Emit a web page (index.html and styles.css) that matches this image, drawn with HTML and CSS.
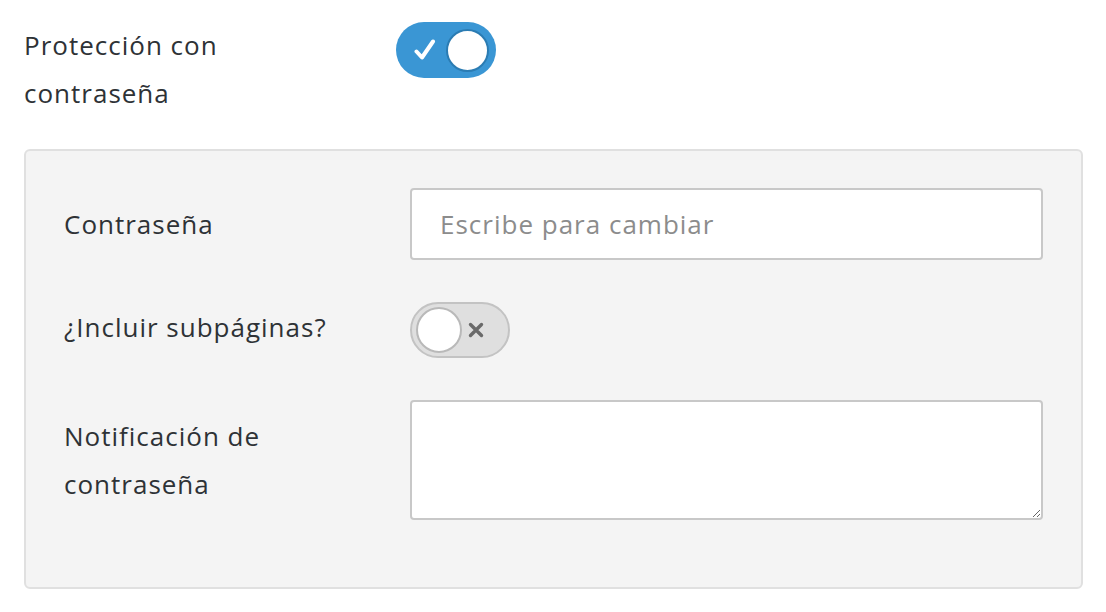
FILE: index.html
```html
<!DOCTYPE html>
<html lang="es">
<head>
<meta charset="utf-8">
<link rel="stylesheet" href="styles.css">
</head>
<body>
<div class="page">
  <div class="top-row">
    <div class="top-label">Protección con<br>contraseña</div>
    <div class="toggle toggle-on">
      <svg class="check" width="22" height="22" viewBox="0 0 22 22"><path d="M2.5 12.5 L8 18.5 L19 2.5" fill="none" stroke="#fff" stroke-width="4" stroke-linecap="round" stroke-linejoin="round"/></svg>
      <span class="knob"></span>
    </div>
  </div>
  <div class="panel">
    <div class="row">
      <label class="label">Contraseña</label>
      <input class="field" type="text" placeholder="Escribe para cambiar">
    </div>
    <div class="row row-toggle">
      <label class="label">¿Incluir subpáginas?</label>
      <div class="toggle toggle-off">
        <span class="knob"></span>
        <svg class="cross" width="16" height="16" viewBox="0 0 16 16"><path d="M2.5 2.5 L13.5 13.5 M13.5 2.5 L2.5 13.5" fill="none" stroke="#6a6a6a" stroke-width="3.4" stroke-linecap="round"/></svg>
      </div>
    </div>
    <div class="row">
      <label class="label">Notificación de<br>contraseña</label>
      <textarea class="field area"></textarea>
    </div>
  </div>
</div>
</body>
</html>
```
FILE: styles.css
```css
* { box-sizing: border-box; }
html, body { margin: 0; padding: 0; background: #fff; }
body {
  font-family: "Open Sans", "Lato", sans-serif;
  font-size: 26px;
  letter-spacing: 1px;
  line-height: 48px;
  color: #2e3236;
}
.page {
  padding: 21px 23px 0 24px;
}
.top-row {
  display: flex;
  align-items: flex-start;
}
.top-label {
  width: 372px;
}
.toggle {
  position: relative;
  width: 100px;
  height: 56px;
  border-radius: 28px;
  display: flex;
  align-items: center;
  flex-shrink: 0;
}
.toggle-on {
  margin-top: 1px;
  background: #3a96d4;
  padding: 0 7px 0 18px;
  justify-content: space-between;
}
.toggle-on .knob {
  width: 43px;
  height: 43px;
  border-radius: 50%;
  background: #fff;
  border: 2px solid #2b7cb3;
}
.check { display: block; }
.toggle-off {
  background: #dfdfdf;
  border: 2px solid #c3c3c3;
  padding: 0 0 0 4px;
}
.toggle-off .knob {
  width: 46px;
  height: 46px;
  border-radius: 50%;
  background: #fff;
  border: 2px solid #b9b9b9;
}
.cross {
  display: block;
  margin-left: 6px;
}
.panel {
  margin-top: 32px;
  width: 1059px;
  background: #f4f4f4;
  border: 2px solid #e0e0e0;
  border-radius: 6px;
  padding: 37px 38px 67px 38px;
  display: flex;
  flex-direction: column;
  gap: 42px;
}
.row {
  display: flex;
  align-items: flex-start;
}
.label {
  width: 346px;
  flex-shrink: 0;
  padding-top: 12px;
}
.row-toggle .label {
  padding-top: 1px;
}
.field {
  width: 633px;
  height: 72px;
  border: 2px solid #c8c8c8;
  border-radius: 4px;
  background: #fff;
  font-family: inherit;
  font-size: 26px;
  letter-spacing: 1px;
  color: #2e3236;
  padding: 0 28px;
  outline: none;
  margin: 0;
}
.field::placeholder {
  color: #8c8c8c;
}
.area {
  height: 120px;
  resize: vertical;
  padding: 12px 28px;
  display: block;
}
```
